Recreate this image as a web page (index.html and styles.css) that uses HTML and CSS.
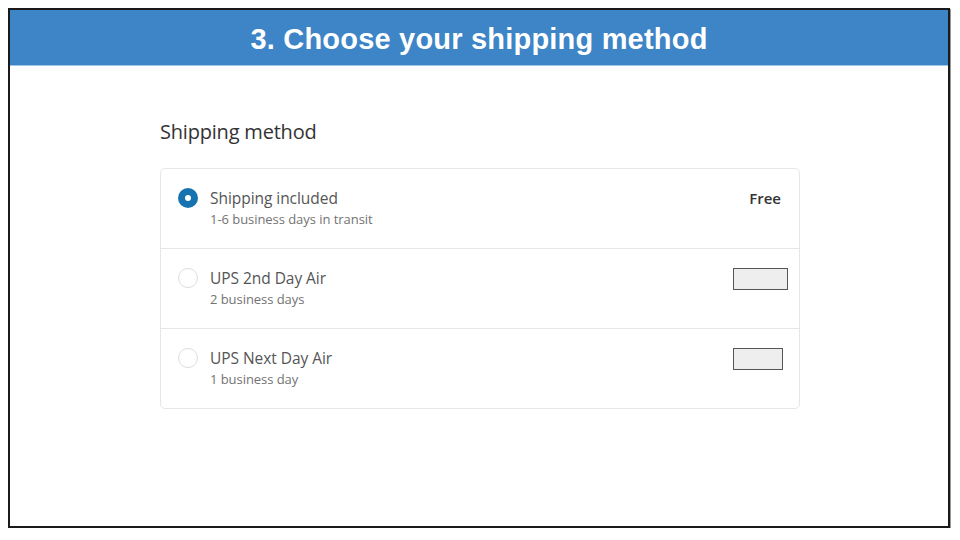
FILE: index.html
```html
<!doctype html>
<html>
<head>
<meta charset="utf-8">
<title>Choose your shipping method</title>
<link rel="stylesheet" href="styles.css">
</head>
<body>
<div id="folie">
	<div id="kopf">3. Choose your shipping method</div>
	<div id="inhalt">
		<h2>Shipping method</h2>
		<div class="karte">
			<div class="zeile">
				<span class="radio an"></span>
				<div class="text">
					<div class="name">Shipping included</div>
					<div class="info">1-6 business days in transit</div>
				</div>
				<div class="preis">Free</div>
			</div>
			<div class="zeile">
				<span class="radio"></span>
				<div class="text">
					<div class="name">UPS 2nd Day Air</div>
					<div class="info">2 business days</div>
				</div>
				<div class="kasten k1"></div>
			</div>
			<div class="zeile">
				<span class="radio"></span>
				<div class="text">
					<div class="name">UPS Next Day Air</div>
					<div class="info">1 business day</div>
				</div>
				<div class="kasten k2"></div>
			</div>
		</div>
	</div>
</div>
</body>
</html>
```
FILE: styles.css
```css
* {margin:0; padding:0; box-sizing:border-box; }
body {background:#fff; font-family:"Open Sans","Noto Sans",sans-serif; }
#folie {margin:8px 0 0 8px; width:942px; height:520px; border:2px solid #1a1a1a; box-shadow:1px 1px 0 #999; background:#fff; }
#kopf {height:56px; background:#3d85c6; border-bottom:1px solid #9fc5e8; color:#fff; font:bold 29px "Liberation Sans",Arial,sans-serif; text-align:center; line-height:58px; letter-spacing:0.2px; }
#inhalt {padding:52px 0 0 150px; }
h2 {font-weight:normal; font-size:20px; color:#333; margin-bottom:23px; letter-spacing:-0.2px; }
.karte {width:640px; border:1px solid #e6e6e6; border-radius:5px; }
.zeile {display:flex; align-items:flex-start; height:80px; padding:18px 18px 0 17px; border-top:1px solid #e6e6e6; }
.zeile:first-child {border-top:none; height:79px; }
.radio {flex:none; width:20px; height:20px; border-radius:50%; border:1px solid #ddd; margin:1px 12px 0 0; }
.radio.an {background:#1773b0; border:none; position:relative; }
.radio.an::after {content:""; position:absolute; left:7px; top:7px; width:6px; height:6px; border-radius:50%; background:#fff; }
.text {flex:1; }
.name {font-size:15.5px; color:#555; line-height:22px; letter-spacing:-0.05px; }
.info {font-size:13px; color:#737373; line-height:20px; letter-spacing:-0.05px; }
.preis {font-size:15px; font-weight:600; color:#333; line-height:22px; }
.kasten {height:22px; border:1px solid #555; background:#eee; margin-top:1px; }
.k1 {width:55px; margin-right:-7px; }
.k2 {width:50px; margin-right:-2px; }
```
